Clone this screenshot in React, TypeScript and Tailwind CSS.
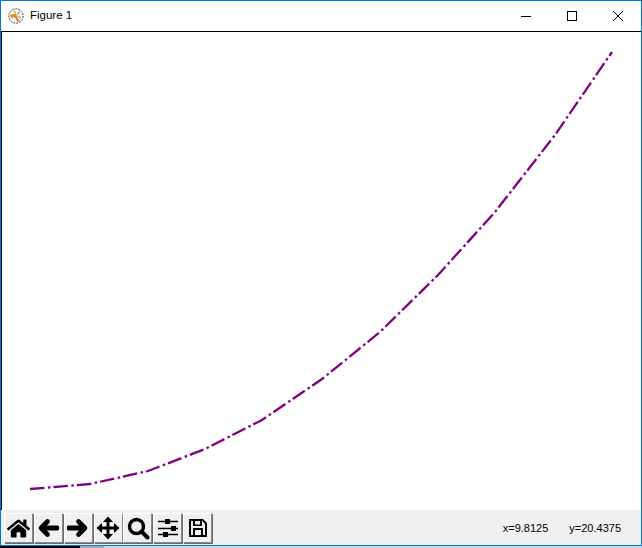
import React from "react";
import { FaHome } from "react-icons/fa";

const pts = "30,489 90,484 148,471 205,449 262,420 322,379 380,332 438,275 495,212 555,135 612,52";

function ArrowLeft() {
  return (
    <svg width="22" height="22" viewBox="0 0 22 22">
      <path d="M5 11H20" stroke="#000" strokeWidth="5" strokeLinecap="round" />
      <path d="M10.5 4.5L4 11L10.5 17.5" fill="none" stroke="#000" strokeWidth="4.6" strokeLinecap="round" strokeLinejoin="round" />
    </svg>
  );
}

function ArrowRight() {
  return (
    <svg width="22" height="22" viewBox="0 0 22 22">
      <path d="M2 11H17" stroke="#000" strokeWidth="5" strokeLinecap="round" />
      <path d="M11.5 4.5L18 11L11.5 17.5" fill="none" stroke="#000" strokeWidth="4.6" strokeLinecap="round" strokeLinejoin="round" />
    </svg>
  );
}

function Move() {
  return (
    <svg width="24" height="24" viewBox="0 0 24 24">
      <path d="M12 3V21M3 12H21" stroke="#000" strokeWidth="3" />
      <path d="M12 0.5L17 6H7ZM12 23.5L7 18H17ZM0.5 12L6 7V17ZM23.5 12L18 17V7Z" fill="#000" />
    </svg>
  );
}

function Search() {
  return (
    <svg width="24" height="24" viewBox="0 0 24 24">
      <circle cx="10.5" cy="10.5" r="7" fill="none" stroke="#000" strokeWidth="3.4" />
      <path d="M15.5 15.5L21.5 21.5" stroke="#000" strokeWidth="4" strokeLinecap="round" />
    </svg>
  );
}

function Sliders() {
  return (
    <svg width="22" height="22" viewBox="0 0 22 22">
      <path d="M1 4.5h20M1 11.5h20M1 17.5h20" stroke="#000" strokeWidth="1.5" />
      <rect x="8" y="2" width="5" height="5" fill="#000" />
      <rect x="14" y="9" width="5" height="5" fill="#000" />
      <rect x="6" y="15" width="5" height="5" fill="#000" />
    </svg>
  );
}

function Save() {
  return (
    <svg width="20" height="20" viewBox="0 0 20 20">
      <path
        d="M2 1H15L19 5V19H1V1ZM3 3V17H5V10H15V17H17V6L14.5 3H14V8H5V3ZM7 3V6.5H12V3ZM7 12V17H13V12Z"
        fill="#000"
        fillRule="evenodd"
      />
    </svg>
  );
}

function Logo() {
  return (
    <svg width="16" height="16" viewBox="0 0 16 16">
      <circle cx="8" cy="8" r="7.2" fill="#f6f6f2" stroke="#444" strokeWidth="1" strokeDasharray="2 1" />
      <path d="M2 7L8 5.5L9 9L3 10Z" fill="#ee8a1a" />
      <path d="M8 8L11.5 13L9.5 14L7 9Z" fill="#e0682a" />
      <path d="M8 8L11 3L12.5 4.5Z" fill="#8fbc5a" />
      <path d="M8 8L13 8.5L12.5 11Z" fill="#a5c77a" />
      <path d="M5 3L7 2.5L8 7Z" fill="#b9b26a" />
    </svg>
  );
}

function ToolButton({ children }: { children: React.ReactNode }) {
  return (
    <button className="flex h-[30px] w-[29px] shrink-0 items-center justify-center border border-t-white border-l-white border-r-[#8a8a8a] border-b-[#8a8a8a] bg-[#f0f0f0] text-[23px] text-black shadow-[1px_1px_0_#6b6b6b]">
      {children}
    </button>
  );
}

export default function App() {
  return (
    <div className="flex h-[548px] w-[642px] flex-col overflow-hidden bg-white font-['Liberation_Sans',sans-serif]">
      <div className="flex min-h-0 flex-1 flex-col border-x border-t border-[#0078d7]">
        <div className="flex h-[30px] shrink-0 items-center bg-white">
          <div className="ml-[7px] flex items-center gap-[6px]">
            <Logo />
            <span className="text-[11.5px] text-black">Figure 1</span>
          </div>
          <div className="ml-auto flex h-full items-center">
            <div className="flex h-full w-[46px] items-center justify-center">
              <div className="h-px w-[10px] bg-black" />
            </div>
            <div className="flex h-full w-[46px] items-center justify-center">
              <div className="h-[10px] w-[10px] border border-black" />
            </div>
            <div className="flex h-full w-[46px] items-center justify-center">
              <svg width="12" height="12" viewBox="0 0 12 12">
                <path d="M1 1L11 11M11 1L1 11" stroke="#000" strokeWidth="1" />
              </svg>
            </div>
          </div>
        </div>
        <div className="min-h-0 flex-1 border-l border-t border-black bg-white">
          <svg width="639" height="478" viewBox="2 32 639 478" className="block">
            <polyline
              points={pts}
              fill="none"
              stroke="#800080"
              strokeWidth="2.3"
              strokeDasharray="14.5 3.5 2.5 3"
            />
          </svg>
        </div>
        <div className="flex h-[35px] shrink-0 items-start bg-[#f0f0f0] pl-[3px] pt-[3px]">
          <div className="flex gap-[0.85px]">
            <ToolButton><FaHome /></ToolButton>
            <ToolButton><ArrowLeft /></ToolButton>
            <ToolButton><ArrowRight /></ToolButton>
            <ToolButton><Move /></ToolButton>
            <ToolButton><Search /></ToolButton>
            <ToolButton><Sliders /></ToolButton>
            <ToolButton><Save /></ToolButton>
          </div>
          <div className="ml-auto mr-[20px] mt-[7px] flex gap-[21px] text-[11px] leading-[16px] text-black">
            <span>x=9.8125</span>
            <span>y=20.4375</span>
          </div>
        </div>
      </div>
      <div className="flex h-[3px] shrink-0 flex-col bg-[#0078d7]">
        <div className="h-px bg-[#0078d7]" />
        <div className="flex h-[2px]">
          <div className="w-[80px] bg-black" />
          <div className="w-[24px] bg-[#a8acb0]" />
          <div className="flex-1 bg-[#cfd6dc]" />
        </div>
      </div>
    </div>
  );
}
